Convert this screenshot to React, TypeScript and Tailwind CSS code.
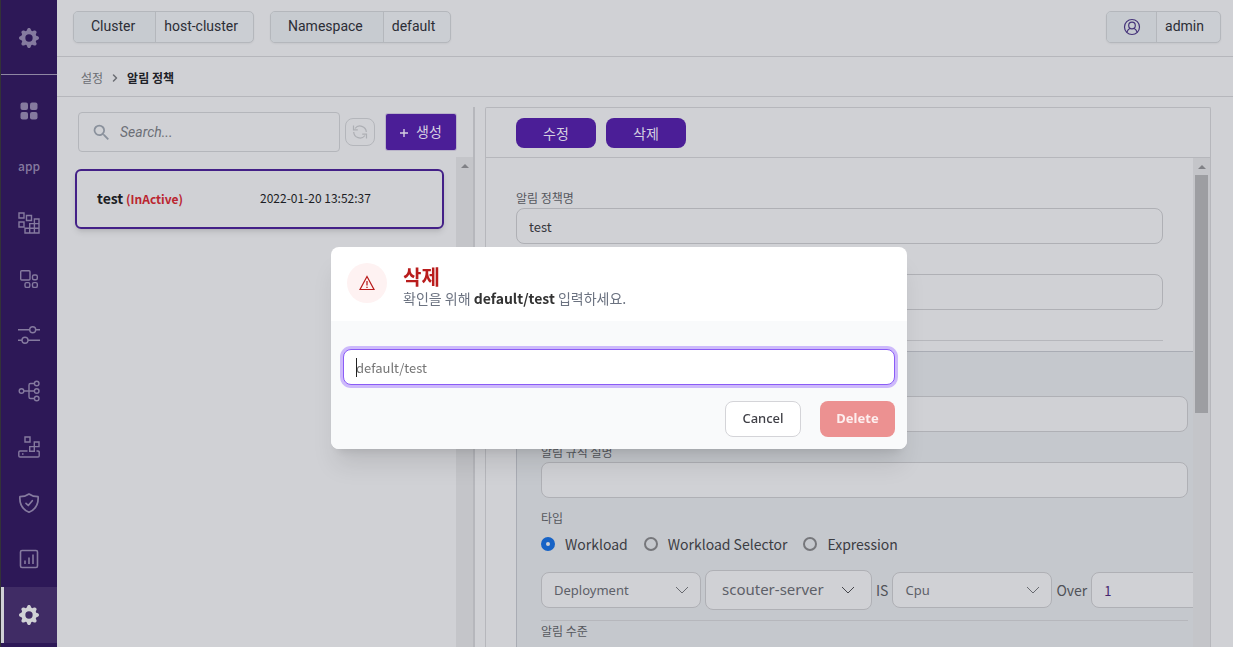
import { useState, type ReactNode } from "react";
import { BsGearFill } from "react-icons/bs";
import { MdSearch } from "react-icons/md";
import { ChevronRight } from "lucide-react";

function Glyph({ children }: { children: ReactNode }) {
  return (
    <svg viewBox="0 0 24 24" className="size-6" fill="none" stroke="currentColor" strokeWidth="1.4">
      {children}
    </svg>
  );
}

const navItems: { label: string; icon: ReactNode }[] = [
  {
    label: "Dashboard",
    icon: (
      <Glyph>
        <g fill="currentColor" stroke="none">
          <rect x="3.5" y="3.5" width="7.5" height="7.5" rx="2" />
          <rect x="13" y="3.5" width="7.5" height="7.5" rx="2" />
          <rect x="3.5" y="13" width="7.5" height="7.5" rx="2" />
          <rect x="13" y="13" width="7.5" height="7.5" rx="2" />
        </g>
      </Glyph>
    ),
  },
  { label: "Applications", icon: <span className="pb-0.5 text-xs leading-5 font-medium">app</span> },
  {
    label: "Clusters",
    icon: (
      <Glyph>
        <path d="M2 2h5v5H2zM9.5 4.500h5v5h-5zM2 11h5v5H2zM8 17.300h14V22H8zM12.700 12.600H22V22h-9.300zM17.400 8H22v14h-4.600z" />
      </Glyph>
    ),
  },
  {
    label: "Workloads",
    icon: (
      <Glyph>
        <rect x="3.700" y="3.700" width="9.300" height="9.300" rx="1" />
        <rect x="15.500" y="8" width="4.800" height="4.800" rx="1.500" />
        <rect x="8" y="15.600" width="4.800" height="4.800" rx="1.500" />
        <rect x="15.500" y="15.600" width="4.800" height="4.800" rx="1.500" />
      </Glyph>
    ),
  },
  {
    label: "Configuration",
    icon: (
      <Glyph>
        <path d="M1 6.700h11.700M18.700 6.700H23M1 17.300h4M11 17.300h12" />
        <circle cx="15.700" cy="6.700" r="3" />
        <circle cx="8" cy="17.300" r="3" />
      </Glyph>
    ),
  },
  {
    label: "Network",
    icon: (
      <Glyph>
        <circle cx="4.500" cy="12" r="2.300" />
        <circle cx="19.700" cy="4.500" r="2.300" />
        <circle cx="19.700" cy="12" r="2.300" />
        <circle cx="19.700" cy="19.500" r="2.300" />
        <path d="M6.800 12h10.600M17.400 4.500H13.500a1.500 1.500 0 0 0-1.500 1.500v12a1.500 1.500 0 0 0 1.500 1.500h3.900" />
      </Glyph>
    ),
  },
  {
    label: "Storage",
    icon: (
      <Glyph>
        <path d="M8 2h5v5H8zM17.300 7H22v4.600h-4.700zM12.700 11.600h4.600v4.600h-4.600z" />
        <path d="M10.500 16H3a1.200 1.200 0 0 0-1.200 1.200v3.600A1.200 1.200 0 0 0 3 22h18a1.200 1.200 0 0 0 1.200-1.200v-3.600A1.200 1.200 0 0 0 21 16h-1.500M5 19h1.500" />
      </Glyph>
    ),
  },
  {
    label: "Security",
    icon: (
      <Glyph>
        <g strokeWidth="1.700" strokeLinejoin="round" strokeLinecap="round">
          <path d="M12 3C9.500 4.800 6.300 5.700 2.900 5.700 2.400 13 4.700 18.200 12 21.200c7.300-3 9.600-8.200 9.100-15.500C17.700 5.700 14.500 4.800 12 3z" />
          <path d="M9 12.300l2.300 2.200 4-4.800" />
        </g>
      </Glyph>
    ),
  },
  {
    label: "Monitoring",
    icon: (
      <Glyph>
        <rect x="3.500" y="3.500" width="17" height="17" rx="1.500" strokeWidth="1.600" />
        <path d="M8 13.500V17M12 10.500V17M16 7.500V17" strokeWidth="1.600" />
      </Glyph>
    ),
  },
];

function Sidebar() {
  return (
    <nav className="flex w-[57px] shrink-0 flex-col border-l border-[#333238] bg-[#2d1857] text-[#857a9f]">
      <a href="#home" aria-label="Home" className="flex h-[75px] shrink-0 items-center justify-center border-b border-[#8f87a3] pt-0.5">
        <BsGearFill size={20} />
      </a>
      <div className="flex flex-col pt-2">
        {navItems.map((item) => (
          <a key={item.label} href="#nav" aria-label={item.label} className="flex h-14 items-center justify-center">
            {item.icon}
          </a>
        ))}
        <a
          href="#settings"
          aria-label="Settings"
          className="flex h-14 items-center justify-center border-l-3 border-[#d0d1d5] bg-[#402c65] pr-[3px] text-[#d0d1d5]"
        >
          <BsGearFill size={20} />
        </a>
      </div>
    </nav>
  );
}

function Pill({ name, value, tight = false }: { name: ReactNode; value: string; tight?: boolean }) {
  return (
    <div className="flex h-8 rounded-[5px] border border-[#b4b7bc] bg-[#cbced3] font-[Roboto,'Noto_Sans',sans-serif] text-sm leading-7 text-[#2c2d36] shadow-xs">
      <span
        className={`rounded-l border-r border-[#b4b7bc] bg-[#c7cbd0] ${tight ? "flex items-center pr-[15px] pl-4" : "pr-5 pl-[17px]"}`}
      >
        {name}
      </span>
      <span className={tight ? "pr-4 pl-2" : "pr-[15px] pl-2"}>{value}</span>
    </div>
  );
}

function UserIcon() {
  return (
    <svg viewBox="0 0 18 18" className="size-[18px] text-[#45337a]" fill="none" stroke="currentColor" strokeWidth="1.200">
      <circle cx="9" cy="9" r="7.500" />
      <circle cx="9" cy="7.500" r="3.300" />
      <path d="M3.800 14.200c.8-2.200 2.100-3.500 3.500-4M14.200 14.200c-.8-2.200-2.100-3.500-3.500-4" />
    </svg>
  );
}

function ArrowUp() {
  return (
    <svg viewBox="0 0 8 4" className="mt-[7px] h-1 w-2" fill="#808186">
      <path d="M4 0l4 4H0z" />
    </svg>
  );
}

function Field({ id, label, value = "" }: { id: string; label: string; value?: string }) {
  return (
    <div className="flex flex-col">
      <label htmlFor={id} className="text-xs leading-5 text-[#56585e]">
        {label}
      </label>
      <input
        id={id}
        defaultValue={value}
        className="h-9 w-full rounded-lg border border-[#afb0b5] bg-[#d0d1d5] px-3 text-[13px] text-[#35363c]"
      />
    </div>
  );
}

function Choice({ label, value, large = false }: { label: string; value: string; large?: boolean }) {
  return (
    <div className={`relative shrink-0 font-['Noto_Sans',sans-serif] ${large ? "w-[167px]" : "w-40"}`}>
      <select
        aria-label={label}
        className={`block w-full appearance-none rounded-lg border border-[#afb0b5] bg-[#d0d1d5] text-[#5d6068] ${
          large ? "h-10 pl-4 text-[15px]" : "h-9 pl-3 text-[13px]"
        }`}
      >
        <option>{value}</option>
      </select>
      <svg
        viewBox="0 0 14 8"
        className={`pointer-events-none absolute inset-y-0 my-auto h-2 w-3.5 ${large ? "right-[17px] text-[#44454b]" : "right-3 text-[#686a70]"}`}
        fill="none"
        stroke="currentColor"
      >
        <path d="M1 1l6 6 6-6" />
      </svg>
    </div>
  );
}

function Radio({ label, checked = false }: { label: string; checked?: boolean }) {
  return (
    <label className="flex items-center gap-[10px]">
      <input
        type="radio"
        name="type"
        defaultChecked={checked}
        className="size-3.5 appearance-none rounded-full border-2 border-[#76777b] checked:border-5 checked:border-[#1763c6] checked:bg-[#d0d1d5]"
      />
      {label}
    </label>
  );
}

function PolicyList() {
  return (
    <section className="flex w-[418px] shrink-0 flex-col border-r-2 border-[#b6b7bc]">
      <div className="flex items-center pt-[5px] pr-[17px] pb-[5px] pl-[21px]">
        <div className="flex h-10 min-w-0 flex-1 items-center gap-2 rounded border border-[#b4b6bb] pl-3">
          <MdSearch size={21} className="shrink-0 text-[#8a919c]" />
          <input
            aria-label="Search"
            placeholder="Search..."
            className="min-w-0 flex-1 bg-transparent font-[Roboto,sans-serif] text-sm italic placeholder:text-[#6c6f77]"
          />
        </div>
        <button
          type="button"
          aria-label="Refresh"
          className="mr-[11px] ml-[5px] flex h-7 w-[30px] items-center justify-center rounded-lg border border-[#b4b6bb] text-[#adafb4]"
        >
          <svg viewBox="0 0 16 16" className="size-4" fill="none" stroke="currentColor" strokeWidth="1.200">
            <path d="M3 4.500A6.300 6.300 0 0 1 14.300 8M13 11.500A6.300 6.300 0 0 1 1.700 8M1.500 1.500v4.300h4.300M14.500 14.500v-4.300h-4.300" />
          </svg>
        </button>
        <button
          type="button"
          className="flex h-9 w-[70px] items-center justify-center gap-2 rounded-xs bg-[#4b1e97] pb-0.5 text-sm text-[#d5cfe1] ring-1 ring-[#b9b3c9]"
        >
          <svg viewBox="0 0 8 8" className="mt-1 size-2" stroke="currentColor" strokeWidth="1.400">
            <path d="M4 0v8M0 4h8" />
          </svg>
          생성
        </button>
      </div>
      <div className="flex min-h-0 flex-1">
        <div className="flex-1 pt-3 pr-3 pl-[18px]">
          <a href="#test" className="flex h-15 items-center rounded-md border-2 border-[#432087] pb-0.5 pl-5 text-xs text-[#1c1d24] shadow-md">
            <span className="w-[163px] font-bold">
              <span className="text-sm">test</span> <span className="text-[#bb2530]">(InActive)</span>
            </span>
            <span>2022-01-20 13:52:37</span>
          </a>
        </div>
        <div className="flex w-[17px] flex-col items-center bg-[#c4c5c9]">
          <ArrowUp />
        </div>
      </div>
    </section>
  );
}

function PolicyDetail() {
  return (
    <section className="mr-[22px] ml-[10px] flex min-w-0 flex-1 flex-col rounded-t-xs border border-b-0 border-[#b6b7bc]">
      <div className="flex h-[50px] shrink-0 items-center gap-[10px] border-b border-[#b6b7bc] px-[30px]">
        <button type="button" className="h-[30px] w-20 rounded-lg bg-[#4b1e97] text-sm text-[#d5d0e0]">
          수정
        </button>
        <button type="button" className="h-[30px] w-20 rounded-lg bg-[#4b1e97] text-sm text-[#d5d0e0]">
          삭제
        </button>
      </div>
      <div className="flex min-h-0 flex-1">
        <form className="flex min-w-0 flex-1 flex-col overflow-hidden pt-[30px] pr-[30px] pl-[30px]">
          <div className="flex flex-col gap-[10px] border-b border-[#b6b7bc] pb-[30px]">
            <Field id="policy-name" label="알림 정책명" value="test" />
            <Field id="policy-desc" label="알림 정책 설명" />
          </div>
          <div className="mt-[10px] -mr-[50px] border border-[#a9acb4] bg-[#c5c8cd] p-6">
            <div className="flex flex-col gap-[10px]">
              <Field id="rule-name" label="알림 규칙명" />
              <Field id="rule-desc" label="알림 규칙 설명" />
            </div>
            <fieldset>
              <legend className="pt-[10px] text-xs leading-5 text-[#56585e]">타입</legend>
              <div className="mt-1 flex h-6 items-center gap-4 text-sm text-[#3c3d43]">
                <Radio label="Workload" checked />
                <Radio label="Workload Selector" />
                <Radio label="Expression" />
              </div>
            </fieldset>
            <div className="mt-[14px] flex items-center gap-1 text-sm text-[#505258]">
              <Choice label="Kind" value="Deployment" />
              <Choice label="Target" value="scouter-server" large />
              <span className="shrink-0">IS</span>
              <Choice label="Metric" value="Cpu" />
              <span className="shrink-0">Over</span>
              <input
                aria-label="Threshold"
                defaultValue="1"
                className="h-9 w-40 shrink-0 rounded-lg border border-[#afb0b5] bg-[#d0d1d5] px-3 text-[13px] text-[#45256f]"
              />
            </div>
            <div className="mt-[10px] border-t border-[#b6b7bc] text-xs leading-5 text-[#56585e]">알림 수준</div>
          </div>
        </form>
        <div className="flex w-[17px] shrink-0 flex-col items-center bg-[#c4c5c9]">
          <ArrowUp />
          <div className="mt-[6px] h-[238px] w-[13px] bg-[#9d9ea2]" />
        </div>
      </div>
    </section>
  );
}

function DeleteDialog() {
  const [text, setText] = useState("");
  return (
    <div className="fixed inset-0 flex items-center justify-center pt-[49px] pl-[5px]">
      <div role="dialog" aria-modal="true" aria-labelledby="dialog-title" className="w-xl overflow-hidden rounded-lg bg-white shadow-xl">
        <div className="flex items-start gap-4 px-4 pt-4 pb-[14px]">
          <div className="flex size-10 items-center justify-center rounded-full bg-[#fef2f2]">
            <svg viewBox="0 0 16 16" className="size-4 text-[#b91c1c]" fill="none" stroke="currentColor">
              <path d="M8 1.500L15 14.500H1z" strokeWidth="1.200" />
              <path d="M8 6v4.500M8 11.700v1.300" strokeWidth="1.300" />
            </svg>
          </div>
          <div className="flex flex-col pt-0.5">
            <h2 id="dialog-title" className="text-xl leading-6 font-bold text-[#b91c1c]">
              삭제
            </h2>
            <p className="text-sm leading-[18px] text-[#6b7280]">
              확인을 위해 <strong className="font-bold text-[#333]">default/test</strong> 입력하세요.
            </p>
          </div>
        </div>
        <div className="bg-[#f9fafb] px-3 pt-7 pb-3">
          <div className="relative">
            <input
              aria-label="Confirm name"
              placeholder="default/test"
              value={text}
              onChange={(e) => setText(e.target.value)}
              className="block h-9 w-full rounded-lg border border-[#8b5cf6] bg-white px-3 text-[13px] ring-3 ring-[#cdb9fb] outline-none placeholder:text-[#757575]"
            />
            {text === "" && <span className="absolute top-[9px] left-[13px] h-[19px] w-px bg-[#222]" />}
          </div>
          <div className="mt-4 flex justify-end gap-[19px] font-['Noto_Sans',sans-serif] text-[13px]">
            <button type="button" className="h-9 w-19 rounded-lg border border-[#d4d4d8] bg-white font-medium text-[#3f3f46]">
              Cancel
            </button>
            <button type="button" className="h-9 w-[75px] rounded-lg bg-[#ec9191] font-bold text-[#fdeeee]">
              Delete
            </button>
          </div>
        </div>
      </div>
    </div>
  );
}

export default function App() {
  return (
    <div className="flex h-screen overflow-hidden bg-[#d0d1d5] font-['Noto_Sans_CJK_KR',sans-serif]">
      <Sidebar />
      <main className="flex min-w-0 flex-1 flex-col">
        <header className="flex h-[57px] shrink-0 items-start gap-4 border-b border-[#b6b7bc] pt-[11px] pr-3 pl-4">
          <Pill name="Cluster" value="host-cluster" />
          <Pill name="Namespace" value="default" />
          <div className="ml-auto">
            <Pill name={<UserIcon />} value="admin" tight />
          </div>
        </header>
        <div className="flex h-10 shrink-0 items-center gap-[6px] border-b border-[#b6b7bc] pt-0.5 pl-6 text-xs text-[#6b6d73]">
          <span>설정</span>
          <ChevronRight size={12} strokeWidth={3} />
          <span className="font-bold text-[#202127]">알림 정책</span>
        </div>
        <div className="flex min-h-0 flex-1 pt-[10px]">
          <PolicyList />
          <PolicyDetail />
        </div>
      </main>
      <DeleteDialog />
    </div>
  );
}
